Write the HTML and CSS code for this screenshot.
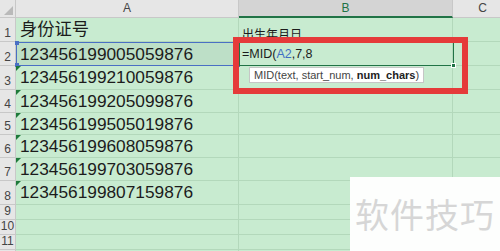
FILE: index.html
```html
<!DOCTYPE html>
<html lang="zh">
<head>
    <meta charset="UTF-8">
    <title>MID</title>
    <link rel="stylesheet" href="styles.css">
</head>
<body>
    <div class="sheet">
        <div class="grid">
            <div class="corner"><span class="corner-tri"></span></div>
            <div class="col-head">A</div>
            <div class="col-head active">B</div>
            <div class="col-head">C</div>

            <div class="row-head">1</div>
            <div class="cell big">身份证号</div>
            <div class="cell small">出生年月日</div>
            <div class="cell"></div>

            <div class="row-head">2</div>
            <div class="cell big ref">123456199005059876<i class="dot tl"></i><i class="dot bl"></i><i class="dot br"></i></div>
            <div class="cell"></div>
            <div class="cell"></div>

            <div class="row-head">3</div>
            <div class="cell big flag">123456199210059876</div>
            <div class="cell"></div>
            <div class="cell"></div>

            <div class="row-head">4</div>
            <div class="cell big flag">123456199205099876</div>
            <div class="cell"></div>
            <div class="cell"></div>

            <div class="row-head">5</div>
            <div class="cell big flag">123456199505019876</div>
            <div class="cell"></div>
            <div class="cell"></div>

            <div class="row-head">6</div>
            <div class="cell big flag">123456199608059876</div>
            <div class="cell"></div>
            <div class="cell"></div>

            <div class="row-head">7</div>
            <div class="cell big flag">123456199703059876</div>
            <div class="cell"></div>
            <div class="cell"></div>

            <div class="row-head">8</div>
            <div class="cell big flag">123456199807159876</div>
            <div class="cell"></div>
            <div class="cell"></div>

            <div class="row-head">9</div>
            <div class="cell"></div>
            <div class="cell"></div>
            <div class="cell"></div>

            <div class="row-head">10</div>
            <div class="cell"></div>
            <div class="cell"></div>
            <div class="cell"></div>

            <div class="row-head">11</div>
            <div class="cell"></div>
            <div class="cell"></div>
            <div class="cell"></div>

            <div class="row-head"></div>
            <div class="cell"></div>
            <div class="cell"></div>
            <div class="cell"></div>
        </div>

        <div class="editor">=MID(<span class="ref-text">A2</span>,7,8<i class="handle"></i></div>
        <div class="tip">MID(text, start_num, <b>num_chars</b>)</div>
        <div class="mark-box"></div>
        <div class="watermark">软件技巧</div>
    </div>
</body>
</html>
```

FILE: styles.css
```css
* {
    margin: 0;
    padding: 0;
    box-sizing: border-box;
}

body {
    width: 500px;
    height: 251px;
    overflow: hidden;
    background: #c8ebd0;
    font-family: 'Liberation Sans', 'Noto Sans CJK SC', sans-serif;
}

.sheet {
    position: relative;
    width: 500px;
    height: 251px;
    overflow: hidden;
}

.grid {
    display: grid;
    grid-template-columns: 16px 223px 214px 60px;
    grid-template-rows: 18px 24px 24px 24px 23px 22px 23px 23px 24px 15px 15px 15px 15px;
}

.corner,
.col-head,
.row-head {
    background: #e6e6e6;
    color: #444;
    border-right: 1px solid #c8c8c8;
    border-bottom: 1px solid #c8c8c8;
}

.corner {
    position: relative;
}

.corner-tri {
    position: absolute;
    right: 2px;
    bottom: 2px;
    border-left: 9px solid transparent;
    border-bottom: 9px solid #b9b9b9;
}

.col-head {
    font-size: 12px;
    line-height: 17px;
    text-align: center;
}

.col-head.active {
    background: #d4d4d4;
    border-bottom: 2px solid #217346;
    color: #217346;
}

.row-head {
    font-size: 12px;
    text-align: center;
    display: flex;
    align-items: flex-end;
    justify-content: center;
    padding-bottom: 1px;
    line-height: 14px;
}

.cell {
    position: relative;
    border-right: 1px solid #b3d8bb;
    border-bottom: 1px solid #b3d8bb;
    color: #1c1c1c;
    white-space: nowrap;
    overflow: hidden;
}

.big {
    font-size: 17.3px;
    line-height: 23px;
    padding-left: 4px;
}

.small {
    font-size: 12px;
    line-height: 14px;
    padding-left: 3px;
    padding-top: 10px;
}

.flag::before {
    content: "";
    position: absolute;
    left: 0;
    top: 0;
    border-top: 5px solid #1e7a3a;
    border-right: 5px solid transparent;
}

.ref {
    background: #bddfc7;
    border: 1px solid #4a6fc4;
    overflow: visible;
    line-height: 22px;
    padding-left: 3px;
}

.dot {
    position: absolute;
    width: 4px;
    height: 4px;
    background: #4a6fc4;
}

.dot.tl { left: -2px; top: -2px; }
.dot.bl { left: -2px; bottom: -2px; }
.dot.br { right: -2px; bottom: -2px; }

.editor {
    position: absolute;
    left: 239px;
    top: 42px;
    width: 215px;
    height: 24px;
    border: 1px solid #217346;
    font-size: 12.5px;
    line-height: 22px;
    padding-left: 2px;
    color: #1c1c1c;
}

.ref-text {
    color: #3f6fc4;
}

.handle {
    position: absolute;
    right: -3px;
    bottom: -3px;
    width: 5px;
    height: 5px;
    background: #217346;
    border: 1px solid #fff;
}

.tip {
    position: absolute;
    left: 249px;
    top: 67px;
    height: 16px;
    padding: 0 4px;
    background: #fff;
    border: 1px solid #c6c6c6;
    color: #444;
    font-size: 11px;
    line-height: 14px;
}

.tip b {
    color: #222;
}

.mark-box {
    position: absolute;
    left: 233px;
    top: 37px;
    width: 235px;
    height: 57px;
    border: 6px solid #e53a3a;
}

.watermark {
    position: absolute;
    left: 350px;
    top: 177px;
    width: 150px;
    height: 74px;
    background: #fdfefd;
    color: #d6d6d6;
    font-family: 'Noto Sans CJK SC', sans-serif;
    font-size: 34px;
    line-height: 74px;
    padding-left: 5px;
    letter-spacing: 1px;
}
```
